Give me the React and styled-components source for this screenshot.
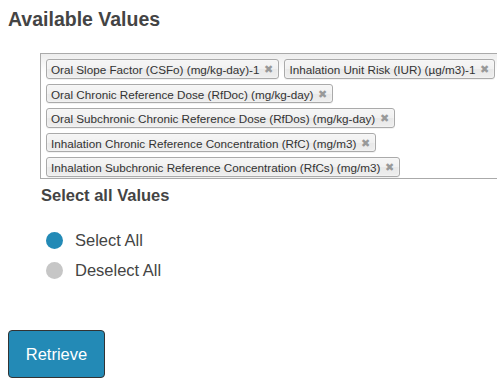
import React from "react";
import styled, { createGlobalStyle } from "styled-components";

const values = [
  "Oral Slope Factor (CSFo) (mg/kg-day)-1",
  "Inhalation Unit Risk (IUR) (µg/m3)-1",
  "Oral Chronic Reference Dose (RfDoc) (mg/kg-day)",
  "Oral Subchronic Chronic Reference Dose (RfDos) (mg/kg-day)",
  "Inhalation Chronic Reference Concentration (RfC) (mg/m3)",
  "Inhalation Subchronic Reference Concentration (RfCs) (mg/m3)",
];

export default function App() {
  const [all, setAll] = React.useState(true);

  return (
    <>
      <Global />
      <Page>
        <Heading>Available Values</Heading>
        <Choices>
          {values.map((v) => (
            <Choice key={v}>
              {v}
              <Close>✖</Close>
            </Choice>
          ))}
        </Choices>
        <Options>
          <SubHeading>Select all Values</SubHeading>
          <RadioList>
            <RadioRow onClick={() => setAll(true)}>
              <Dot $on={all} />
              Select All
            </RadioRow>
            <RadioRow onClick={() => setAll(false)}>
              <Dot $on={!all} />
              Deselect All
            </RadioRow>
          </RadioList>
        </Options>
        <Button>Retrieve</Button>
      </Page>
    </>
  );
}

const Global = createGlobalStyle`
  html {
    overflow: hidden;
  }
  body {
    margin: 8px 0 8px 8px;
    font-family: "Liberation Sans", Arial, sans-serif;
    color: #333;
    background: #fff;
  }
`;

const Page = styled.div`
  display: flex;
  flex-direction: column;
`;

const Heading = styled.h3`
  margin: 0;
  font-size: 19.5px;
  line-height: 22px;
  font-weight: bold;
  color: #444;
`;

const Choices = styled.ul`
  list-style: none;
  display: flex;
  flex-wrap: wrap;
  align-content: flex-start;
  column-gap: 5px;
  margin: 23px 0 0 32px;
  padding: 0 0 0 5px;
  height: 126px;
  box-sizing: border-box;
  border: 1px solid #aaa;
  border-right: none;
  background: linear-gradient(#eee 1%, #fff 15%);
`;

const Choice = styled.li`
  position: relative;
  margin-top: 5px;
  padding: 3px 19px 3px 4px;
  height: 19.5px;
  box-sizing: border-box;
  border: 1px solid #aaa;
  border-radius: 3px;
  background: linear-gradient(#f4f4f4 20%, #f0f0f0 50%, #e8e8e8 52%, #eee 100%);
  box-shadow: 0 0 2px #fff inset, 0 1px 0 rgba(0, 0, 0, 0.05);
  font-size: 11.7px;
  line-height: 13px;
  color: #333;
  white-space: nowrap;
`;

const Close = styled.span`
  position: absolute;
  top: 3px;
  right: 5px;
  font-size: 10.5px;
  line-height: 12px;
  color: #999;
`;

const Options = styled.div`
  display: flex;
  flex-direction: column;
  margin-left: 33px;
`;

const SubHeading = styled.h4`
  margin: 6px 0 0;
  font-size: 16.5px;
  line-height: 20px;
  font-weight: bold;
  color: #444;
`;

const RadioList = styled.div`
  display: flex;
  flex-direction: column;
  gap: 10px;
  margin-top: 25px;
`;

const RadioRow = styled.label`
  display: flex;
  align-items: center;
  gap: 12px;
  font-size: 16.5px;
  line-height: 20px;
  color: #444;
  cursor: pointer;
`;

const Dot = styled.span`
  width: 17px;
  height: 17px;
  margin-left: 5px;
  border-radius: 50%;
  background: ${(p) => (p.$on ? "#238ab6" : "#c6c6c6")};
`;

const Button = styled.button`
  align-self: flex-start;
  margin-top: 50px;
  width: 97px;
  height: 48px;
  border: 1px solid #333;
  border-radius: 4px;
  background: #238ab6;
  color: #fff;
  font-family: "Liberation Sans", Arial, sans-serif;
  font-size: 16.5px;
`;
